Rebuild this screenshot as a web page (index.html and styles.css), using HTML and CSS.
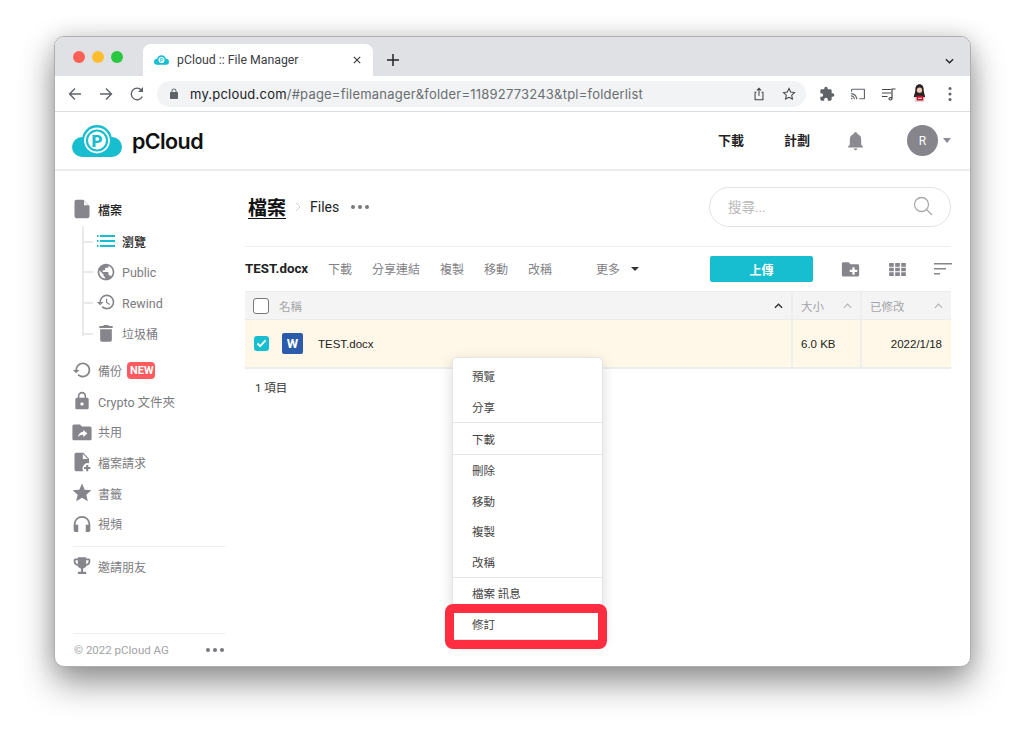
FILE: index.html
```html
<!DOCTYPE html>
<html lang="zh-Hant">
  <head>
    <meta charset="UTF-8" />
    <title>pCloud :: File Manager</title>
    <link rel="stylesheet" href="styles.css">
  </head>
  <body>
    <div class="window">
      <!-- Tab strip -->
      <div class="tabstrip">
        <div class="lights">
          <span class="light red"></span>
          <span class="light yellow"></span>
          <span class="light green"></span>
        </div>
        <div class="tab">
          <svg class="favicon" viewBox="0 0 50 32">
            <circle cx="25" cy="15" r="15" fill="#17bed0"/>
            <circle cx="10" cy="22" r="10" fill="#17bed0"/>
            <circle cx="40" cy="22" r="10" fill="#17bed0"/>
            <path fill="#17bed0" d="M10 20h30v12H10z"/>
            <circle cx="25" cy="16" r="10" fill="#fff"/>
            <text x="25" y="22" class="favicon-p">P</text>
          </svg>
          <span class="tab-title">pCloud :: File Manager</span>
          <svg class="tab-close" viewBox="0 0 10 10"><path d="M1 1l8 8M9 1l-8 8"/></svg>
        </div>
        <svg class="tab-new" viewBox="0 0 12 12"><path d="M6 0v12M0 6h12"/></svg>
        <svg class="tab-menu" viewBox="0 0 10 6"><path d="M1 1l4 4 4-4"/></svg>
      </div>

      <!-- Browser toolbar -->
      <div class="toolbar">
        <svg class="tool-icon" viewBox="0 0 16 16"><path class="line" d="M14 8H2.500M8 2.500L2.500 8 8 13.500"/></svg>
        <svg class="tool-icon" viewBox="0 0 16 16"><path class="line" d="M2 8h11.500M8 2.500L13.500 8 8 13.500"/></svg>
        <svg class="tool-icon" viewBox="0 0 16 16"><path class="line" d="M13.300 10.500A5.800 5.800 0 1 1 12.500 4.200"/><path class="solid" d="M14 1v5H9z"/></svg>
        <div class="urlbar">
          <svg class="lock" viewBox="0 0 24 24"><path class="solid" d="M18 8h-1V6c0-2.760-2.240-5-5-5S7 3.240 7 6v2H6c-1.100 0-2 .900-2 2v10c0 1.100.900 2 2 2h12c1.100 0 2-.900 2-2V10c0-1.100-.900-2-2-2zM15.100 8H8.900V6c0-1.710 1.390-3.100 3.100-3.100 1.710 0 3.100 1.390 3.100 3.100v2z"/></svg>
          <span class="url"><b>my.pcloud.com</b>/#page=filemanager&amp;folder=11892773243&amp;tpl=folderlist</span>
          <svg class="url-icon share" viewBox="0 0 16 16"><path class="line thin" d="M5 6H3.500v8.500h9V6H11M8 10V1.500M5.500 4L8 1.500 10.500 4"/></svg>
          <svg class="url-icon" viewBox="0 0 16 16"><path class="line thin" d="M8 1.800l1.900 4 4.400.6-3.200 3 .8 4.400L8 11.700l-3.900 2.100.8-4.400-3.200-3 4.400-.6z"/></svg>
        </div>
        <div class="ext-icons">
          <svg class="ext-icon" viewBox="0 0 24 24"><path class="solid" d="M20.500 11H19V7c0-1.100-.900-2-2-2h-4V3.500C13 2.120 11.880 1 10.500 1S8 2.120 8 3.500V5H4c-1.100 0-1.990.900-1.990 2v3.800H3.500c1.490 0 2.700 1.210 2.700 2.700s-1.210 2.700-2.700 2.700H2V20c0 1.100.900 2 2 2h3.800v-1.500c0-1.490 1.210-2.700 2.700-2.700 1.490 0 2.700 1.210 2.700 2.700V22H17c1.100 0 2-.900 2-2v-4h1.500c1.380 0 2.500-1.120 2.500-2.500S21.880 11 20.500 11z"/></svg>
          <svg class="ext-icon" viewBox="0 0 24 24"><path class="solid" d="M21 4H3.500C2.400 4 1.500 4.900 1.500 6v2.500h1.700V5.700h17.600v12.600H14V20h7c1.100 0 1.500-.9 1.500-2V6c0-1.100-.4-2-1.500-2zM1.500 17.500V20h2.500c0-1.400-1.100-2.500-2.500-2.500zm0-3.500v1.700c2.400 0 4.300 1.900 4.300 4.300h1.700c0-3.300-2.700-6-6-6zm0-3.500v1.700c4.300 0 7.800 3.500 7.800 7.800H11c0-5.200-4.300-9.500-9.500-9.500z"/></svg>
          <svg class="ext-icon" viewBox="0 0 16 16"><path class="line thin" d="M1 3.500h9M1 7h9M1 10.500h5.500M11 12.500c0 1-.800 1.500-1.500 1.500S8 13.500 8 12.800s.700-1.300 1.500-1.300 1.500.300 1.500 1zM11 12.500V3h3.500"/></svg>
          <svg class="ext-avatar" viewBox="0 0 16 20">
            <path fill="#2b2424" d="M8 0c3 0 4.500 2.500 4.500 6 0 4 1.500 5 1.500 8H2c0-3 1.500-4 1.500-8C3.500 2.500 5 0 8 0z"/>
            <circle cx="8" cy="6.500" r="2.800" fill="#f3cdb8"/>
            <path fill="#e3dcd6" d="M3 14h10v5H3z"/>
            <path fill="#c8102e" d="M5 12.500h7v5H5z"/>
            <path fill="#fff" d="M6.500 14.500h4v1h-4z"/>
          </svg>
          <svg class="ext-icon" viewBox="0 0 16 16"><circle class="solid" cx="8" cy="2.500" r="1.500"/><circle class="solid" cx="8" cy="8" r="1.500"/><circle class="solid" cx="8" cy="13.500" r="1.500"/></svg>
        </div>
      </div>

      <!-- App header -->
      <header class="app-header">
        <svg class="logo" viewBox="0 0 50 32">
          <circle cx="25" cy="15" r="15" fill="#17bed0"/>
          <circle cx="10" cy="22" r="10" fill="#17bed0"/>
          <circle cx="40" cy="22" r="10" fill="#17bed0"/>
          <path fill="#17bed0" d="M10 20h30v12H10z"/>
          <circle cx="25" cy="15.500" r="12" fill="none" stroke="#fff" stroke-width="1.800"/>
          <circle cx="25" cy="15.500" r="9" fill="#fff"/>
          <text x="25" y="21.500" class="logo-p">P</text>
        </svg>
        <span class="logo-text">pCloud</span>
        <nav class="app-nav">
          <a class="nav-link">下載</a>
          <a class="nav-link">計劃</a>
        </nav>
        <svg class="bell" viewBox="0 0 24 24"><path d="M12 23c1.100 0 2-.900 2-2h-4c0 1.100.900 2 2 2zm6.500-6.500V11c0-3.070-1.630-5.640-4.500-6.320V4c0-.830-.670-1.500-2-1.500s-2 .670-2 1.500v.680C7.140 5.360 5.500 7.920 5.500 11v5.500L3.500 19v1h17v-1z"/></svg>
        <div class="user-avatar">R</div>
        <span class="user-caret"></span>
      </header>

      <div class="content">
        <!-- Sidebar -->
        <aside class="sidebar">
          <div class="side-item active-parent">
            <svg class="side-icon" viewBox="0 0 24 24"><path d="M5.500 1C4.100 1 3 2.100 3 3.500v17C3 21.900 4.100 23 5.500 23h13c1.400 0 2.500-1.100 2.500-2.500V8.500L13.500 1zM14.500 2.500L19.500 7.500h-5z"/></svg>
            <span>檔案</span>
          </div>
          <div class="tree">
            <div class="side-item tree-item active">
              <svg class="side-icon list-icon" viewBox="0 0 18 12"><path fill="#17bed0" d="M0 0h1.500v2H0zM3 0h15v2H3zM0 5h1.500v2H0zM3 5h15v2H3zM0 10h1.500v2H0zM3 10h15v2H3z"/></svg>
              <span>瀏覽</span>
            </div>
            <div class="side-item tree-item">
              <svg class="side-icon" viewBox="0 0 24 24"><path d="M12 2C6.480 2 2 6.480 2 12s4.480 10 10 10 10-4.480 10-10S17.520 2 12 2zm-1 17.930c-3.950-.490-7-3.850-7-7.930 0-.620.080-1.210.210-1.790L9 15v1c0 1.100.900 2 2 2v1.930zm6.900-2.540c-.260-.810-1-1.390-1.900-1.390h-1v-3c0-.550-.450-1-1-1H8v-2h2c.550 0 1-.450 1-1V7h2c1.100 0 2-.900 2-2v-.410c2.930 1.190 5 4.060 5 7.410 0 2.080-.800 3.970-2.100 5.390z"/></svg>
              <span class="latin">Public</span>
            </div>
            <div class="side-item tree-item">
              <svg class="side-icon" viewBox="0 0 24 24"><path d="M13 3a9 9 0 0 0-9 9H1l3.890 3.890.070.140L9 12H6c0-3.870 3.130-7 7-7s7 3.130 7 7-3.130 7-7 7c-1.930 0-3.680-.790-4.940-2.060l-1.420 1.420A8.954 8.954 0 0 0 13 21a9 9 0 0 0 0-18zm-1 5v5l4.280 2.540.720-1.210-3.500-2.080V8H12z"/></svg>
              <span class="latin">Rewind</span>
            </div>
            <div class="side-item tree-item">
              <svg class="side-icon" viewBox="0 0 24 24"><path d="M5 20.500c0 1.100.900 2 2 2h10c1.100 0 2-.900 2-2V7.500H5zM20 3.500h-4.500l-1-1h-5l-1 1H4V6h16z"/></svg>
              <span>垃圾桶</span>
            </div>
          </div>
          <div class="side-item">
            <svg class="side-icon" viewBox="0 0 24 24"><path d="M13 3a9 9 0 0 0-9 9H1l4 4 4-4H6.200c0-3.760 3.040-6.800 6.800-6.800s6.800 3.040 6.800 6.800-3.040 6.800-6.800 6.800c-1.900 0-3.600-.770-4.800-2L6.600 18.400A9 9 0 1 0 13 3z"/></svg>
            <span>備份</span>
            <span class="badge">NEW</span>
          </div>
          <div class="side-item">
            <svg class="side-icon" viewBox="0 0 24 24"><path d="M18 8h-1V6c0-2.760-2.240-5-5-5S7 3.240 7 6v2H6c-1.100 0-2 .900-2 2v10c0 1.100.900 2 2 2h12c1.100 0 2-.900 2-2V10c0-1.100-.900-2-2-2zm-6 9.500c-1.100 0-2-.900-2-2s.900-2 2-2 2 .900 2 2-.900 2-2 2zM15.100 8H8.900V6c0-1.710 1.390-3.100 3.100-3.100 1.710 0 3.100 1.390 3.100 3.100v2z"/></svg>
            <span class="latin">Crypto 文件夾</span>
          </div>
          <div class="side-item">
            <svg class="side-icon" viewBox="0 0 24 24"><path d="M2.500 3C1.400 3 .500 3.900.500 5v15c0 1.100.900 2 2 2h19c1.100 0 2-.900 2-2V7.500c0-1.100-.900-2-2-2H12L9.500 3zM13.500 9.500l5 4.300-5 4.200v-2.700c-2.700 0-4.700.800-6.300 2.700.500-3.300 2.700-5.800 6.300-6.200z"/></svg>
            <span>共用</span>
          </div>
          <div class="side-item">
            <svg class="side-icon" viewBox="0 0 24 24"><path d="M5 1C3.900 1 3 1.900 3 3v18c0 1.100.900 2 2 2h8.500a6.500 6.500 0 0 1 7-9.500V8l-7-7zM13 2.500L19 8.500h-6zM17 15.500h2.500V18H22v2.500h-2.500V23H17v-2.500h-2.500V18H17z"/></svg>
            <span>檔案請求</span>
          </div>
          <div class="side-item">
            <svg class="side-icon" viewBox="0 0 24 24"><path d="M12 17.800L19 22l-1.850-7.950L23.300 8.700l-8.100-.700L12 .500 8.800 8 .700 8.700l6.150 5.350L5 22z"/></svg>
            <span>書籤</span>
          </div>
          <div class="side-item">
            <svg class="side-icon" viewBox="0 0 24 24"><path d="M12 2.500A10 10 0 0 0 2 12.500v7c0 1 .800 2 2 2h3.500v-8.500H4.300v-1c0-4.200 3.500-7.500 7.700-7.500s7.700 3.300 7.700 7.500v1h-3.200v8.500H20c1.200 0 2-1 2-2v-7a10 10 0 0 0-10-10z"/></svg>
            <span>視頻</span>
          </div>
          <div class="side-divider"></div>
          <div class="side-item">
            <svg class="side-icon" viewBox="0 0 24 24"><path d="M20 3h-3V1.500H7V3H4C2.900 3 2 3.900 2 5v1.500c0 2.700 2.050 4.900 4.700 5.200.700 1.700 2.300 3 4.100 3.350V19H7v2.500h10V19h-3.800v-3.950c1.800-.350 3.400-1.650 4.100-3.350 2.650-.300 4.700-2.500 4.700-5.200V5c0-1.100-.900-2-2-2zM4.200 6.500V5.200H7v4.300C5.400 9.100 4.200 7.900 4.200 6.500zm15.600 0c0 1.400-1.200 2.600-2.800 3V5.200h2.800z"/></svg>
            <span>邀請朋友</span>
          </div>
          <div class="side-footer">
            <span>© 2022 pCloud AG</span>
            <span class="dots small"><i></i><i></i><i></i></span>
          </div>
        </aside>

        <!-- File list -->
        <main class="main">
          <div class="crumbs">
            <span class="crumb-root">檔案</span>
            <svg class="crumb-sep" viewBox="0 0 6 10"><path d="M1 1l4 4-4 4"/></svg>
            <span class="crumb-current">Files</span>
            <span class="dots"><i></i><i></i><i></i></span>
            <div class="search">
              <span>搜尋...</span>
              <svg class="search-icon" viewBox="0 0 20 20"><circle cx="8.500" cy="8.500" r="7"/><path d="M13.500 13.500l5.500 5.500"/></svg>
            </div>
          </div>

          <div class="actions">
            <span class="sel-name">TEST.docx</span>
            <span class="action">下載</span>
            <span class="action">分享連結</span>
            <span class="action">複製</span>
            <span class="action">移動</span>
            <span class="action">改稱</span>
            <span class="action more">更多</span>
            <span class="more-caret"></span>
            <button class="upload">上傳</button>
            <svg class="act-icon folder-add" viewBox="0 0 24 24"><path d="M2.500 3C1.400 3 .500 3.900.500 5v15c0 1.100.900 2 2 2h19c1.100 0 2-.900 2-2V7.500c0-1.100-.900-2-2-2H12L9.500 3zM14.500 9.500h3V13h3.500v3h-3.500v3.500h-3V16H11v-3h3.500z"/></svg>
            <svg class="act-icon grid-view" viewBox="0 0 18 14"><path d="M0 0h5v4H0zM6.500 0h5v4h-5zM13 0h5v4h-5zM0 5h5v4H0zM6.500 5h5v4h-5zM13 5h5v4h-5zM0 10h5v4H0zM6.500 10h5v4h-5zM13 10h5v4h-5z"/></svg>
            <svg class="act-icon sort-view" viewBox="0 0 18 12"><path d="M0 0h18v1.500H0zM0 5h12v1.500H0zM0 10h6v1.500H0z"/></svg>
          </div>

          <div class="table">
            <div class="row head">
              <div class="cell name-cell">
                <span class="check"></span>
                <span>名稱</span>
                <svg class="chev dark" viewBox="0 0 10 6"><path d="M1 5l4-4 4 4"/></svg>
              </div>
              <div class="cell">
                <span>大小</span>
                <svg class="chev" viewBox="0 0 10 6"><path d="M1 5l4-4 4 4"/></svg>
              </div>
              <div class="cell">
                <span>已修改</span>
                <svg class="chev" viewBox="0 0 10 6"><path d="M1 5l4-4 4 4"/></svg>
              </div>
            </div>
            <div class="row file">
              <div class="cell name-cell">
                <span class="check on">
                  <svg viewBox="0 0 12 10"><path d="M1.500 5l3 3 6-6.500"/></svg>
                </span>
                <span class="word-icon">W</span>
                <span class="file-name">TEST.docx</span>
              </div>
              <div class="cell">6.0 KB</div>
              <div class="cell date-cell">2022/1/18</div>
            </div>
          </div>
          <div class="count">1 項目</div>
        </main>
      </div>

      <!-- Context menu -->
      <div class="menu">
        <div class="menu-group">
          <div class="menu-item">預覽</div>
          <div class="menu-item">分享</div>
        </div>
        <div class="menu-group solo">
          <div class="menu-item">下載</div>
        </div>
        <div class="menu-group">
          <div class="menu-item">刪除</div>
          <div class="menu-item">移動</div>
          <div class="menu-item">複製</div>
          <div class="menu-item">改稱</div>
        </div>
        <div class="menu-group">
          <div class="menu-item">檔案 訊息</div>
          <div class="menu-item">修訂</div>
        </div>
      </div>
      <div class="highlight"></div>
    </div>
  </body>
</html>
```

FILE: styles.css
```css
* {
  box-sizing: border-box;
}

body {
  margin: 0;
  padding: 36px 0 0 54px;
  height: 737px;
  overflow: hidden;
  background: #fff;
  font-family: Roboto, "Noto Sans CJK TC", sans-serif;
  color: #222;
}

.window {
  position: relative;
  width: 917px;
  height: 631px;
  display: flex;
  flex-direction: column;
  background: #fff;
  border: 1px solid #aeaeae;
  border-radius: 10px;
  box-shadow: 0 16px 34px rgba(0, 0, 0, 0.42), 0 0 22px rgba(0, 0, 0, 0.12);
  overflow: hidden;
}

/* Tab strip */
.tabstrip {
  height: 39px;
  flex: none;
  display: flex;
  align-items: flex-end;
  background: #dfe1e5;
  position: relative;
}
.lights {
  width: 88px;
  height: 39px;
  padding: 14px 0 0 18px;
  display: flex;
  gap: 7px;
}
.light {
  width: 12px;
  height: 12px;
  border-radius: 50%;
}
.red { background: #ff5f57; }
.yellow { background: #febc2e; }
.green { background: #28c840; }

.tab {
  width: 230px;
  height: 32px;
  display: flex;
  align-items: center;
  padding: 0 10px 0 11px;
  background: #fff;
  border-radius: 8px 8px 0 0;
}
.favicon {
  width: 15px;
  height: 10px;
  margin-right: 8px;
}
.favicon-p {
  font: 700 17px Roboto, sans-serif;
  fill: #17bed0;
  text-anchor: middle;
}
.tab-title {
  flex: 1;
  font-size: 12.300px;
  color: #3c4043;
}
.tab-close {
  width: 8px;
  height: 8px;
  margin-right: 2px;
  fill: none;
  stroke: #333;
  stroke-width: 1.300;
}
.tab-new {
  width: 12px;
  height: 12px;
  margin: 0 0 10px 14px;
  fill: none;
  stroke: #222;
  stroke-width: 1.500;
}
.tab-menu {
  position: absolute;
  right: 16px;
  top: 21px;
  width: 9px;
  height: 6px;
  fill: none;
  stroke: #222;
  stroke-width: 1.500;
}

/* Browser toolbar */
.toolbar {
  height: 36px;
  flex: none;
  display: flex;
  align-items: center;
  padding: 0 0 0 12px;
  border-bottom: 1px solid #dcdde0;
}
.line {
  fill: none;
  stroke: #5f6368;
  stroke-width: 1.400;
}
.line.thin {
  stroke-width: 1.200;
  stroke: #444;
}
.solid {
  fill: #5f6368;
}
.tool-icon {
  width: 16px;
  height: 16px;
  margin-right: 15px;
  flex: none;
}
.urlbar {
  width: 649px;
  height: 26px;
  margin-left: -3px;
  flex: none;
  display: flex;
  align-items: center;
  padding: 0 10px 0 11px;
  background: #f1f3f4;
  border-radius: 13px;
}
.lock {
  width: 12px;
  height: 12px;
  margin-right: 10px;
}
.url {
  flex: 1;
  font-family: Inter, sans-serif;
  font-size: 13px;
  letter-spacing: 0.210px;
  color: #6a6d71;
  white-space: nowrap;
}
.url b {
  font-weight: 400;
  color: #202124;
}
.url-icon {
  width: 14px;
  height: 14px;
  margin-left: 16px;
}
.ext-icons {
  display: flex;
  align-items: center;
  gap: 15px;
  margin-left: 13px;
}
.ext-icon {
  width: 16px;
  height: 16px;
}
.ext-avatar {
  width: 15px;
  height: 19px;
}

/* App header */
.app-header {
  height: 59px;
  flex: none;
  display: flex;
  align-items: center;
  padding: 0 19px 0 17px;
  border-bottom: 2px solid #ececec;
}
.logo {
  width: 50px;
  height: 32px;
}
.logo-p {
  font: 900 17px Roboto, sans-serif;
  fill: #17bed0;
  text-anchor: middle;
}
.logo-text {
  margin-left: 10px;
  font-family: Inter, sans-serif;
  font-size: 21.500px;
  font-weight: 600;
  letter-spacing: -0.6px;
  color: #111;
}
.app-nav {
  display: flex;
  gap: 40px;
  margin-left: auto;
  margin-bottom: 2px;
}
.nav-link {
  font-size: 13px;
  font-weight: 700;
  color: #222;
}
.bell {
  width: 21px;
  height: 21px;
  margin-left: 35px;
  fill: #8a8a90;
}
.user-avatar {
  width: 31px;
  height: 31px;
  margin-left: 41px;
  display: flex;
  align-items: center;
  justify-content: center;
  border-radius: 50%;
  background: #85858b;
  color: #fff;
  font-size: 12px;
}
.user-caret {
  margin-left: 5px;
  border: 4.500px solid transparent;
  border-top: 5px solid #8a8a90;
  border-bottom: 0;
}

.content {
  flex: 1;
  display: flex;
  min-height: 0;
}

/* Sidebar */
.sidebar {
  width: 190px;
  flex: none;
  display: flex;
  flex-direction: column;
  padding: 23px 19px 0 17px;
}
.side-item {
  height: 30.700px;
  flex: none;
  display: flex;
  align-items: center;
  font-size: 12px;
  color: #7b7b80;
}
.latin {
  font-size: 12.500px;
}
.tree .latin {
  padding-top: 2px;
}
.side-icon {
  width: 20px;
  height: 20px;
  margin-right: 6px;
  fill: #85858b;
  flex: none;
}
.side-icon.list-icon {
  width: 18px;
  height: 12px;
  margin: 0 7px 0 1px;
}
.active-parent {
  color: #222;
  font-weight: 500;
}
.tree {
  margin: 1px 0 19.300px 10px;
  border-left: 2px solid #e9e9e9;
  height: 110px;
  padding-left: 12px;
}
.tree-item {
  position: relative;
}
.tree-item::before {
  content: "";
  position: absolute;
  left: -12px;
  top: 15px;
  width: 9px;
  border-top: 2px solid #e9e9e9;
}
.tree-item.active {
  color: #222;
  font-weight: 500;
}
.badge {
  margin-left: 5px;
  padding: 0 0 0 3px;
  width: 28px;
  height: 17px;
  line-height: 17px;
  overflow: hidden;
  border-radius: 4px;
  background: #ff5a5f;
  color: #fff;
  font-size: 11px;
  font-weight: 700;
}
.side-divider {
  height: 1px;
  flex: none;
  margin: 7px 0 4px 1px;
  background: #f0f0f0;
}
.side-footer {
  margin: auto 0 0 1px;
  height: 33px;
  display: flex;
  align-items: center;
  justify-content: space-between;
  border-top: 1px solid #f0f0f0;
  padding: 0 2px 1px 1px;
  font-size: 11.500px;
  color: #a2a2a6;
}

.dots {
  display: inline-flex;
  gap: 3px;
}
.dots i {
  width: 4px;
  height: 4px;
  border-radius: 50%;
  background: #77777c;
}

/* Main */
.main {
  width: 706px;
  flex: none;
}
.crumbs {
  height: 76px;
  display: flex;
  align-items: center;
  padding: 0 0 4px 3px;
  border-bottom: 1px solid #f0f0f0;
}
.crumb-root {
  font-size: 19px;
  font-weight: 700;
  color: #111;
  text-decoration: underline;
  text-underline-offset: 3px;
}
.crumb-sep {
  width: 6px;
  height: 10px;
  margin: 0 9px;
  fill: none;
  stroke: #d2d2d2;
}
.crumb-current {
  font-size: 14px;
  color: #222;
  margin-right: 12px;
}
.search {
  width: 242px;
  height: 40px;
  margin-left: auto;
  display: flex;
  align-items: center;
  justify-content: space-between;
  padding: 0 17px 1px 18px;
  border: 1px solid #e2e2e2;
  border-radius: 20px;
  font-size: 13.500px;
  color: #b9b9b9;
}
.search-icon {
  width: 20px;
  height: 20px;
  fill: none;
  stroke: #a8a8ac;
  stroke-width: 1.300;
}

.actions {
  height: 44px;
  display: flex;
  align-items: center;
  font-size: 12px;
  color: #818186;
  white-space: nowrap;
}
.sel-name {
  width: 83px;
  flex: none;
  padding-bottom: 1px;
  font-weight: 700;
  font-size: 13.300px;
  color: #222;
}
.action {
  flex: none;
  padding-bottom: 2px;
  margin-right: 20px;
}
.action.more {
  margin: 0 11px 0 24px;
}
.more-caret {
  flex: none;
  border: 4px solid transparent;
  border-top: 4px solid #333;
  border-bottom: 0;
}
.upload {
  width: 103px;
  height: 26px;
  flex: none;
  margin-left: 71px;
  border: 0;
  border-radius: 2px;
  background: #17bed0;
  color: #fff;
  font: 700 12px Roboto, "Noto Sans CJK TC", sans-serif;
}
.act-icon {
  fill: #85858b;
  flex: none;
}
.folder-add {
  width: 19px;
  height: 18px;
  margin-left: 28px;
}
.grid-view {
  width: 17px;
  height: 13px;
  margin-left: 29px;
}
.sort-view {
  width: 18px;
  height: 12px;
  margin-left: 28px;
}

/* Table */
.row {
  display: grid;
  grid-template-columns: 546px 69px 91px;
}
.cell {
  display: flex;
  align-items: center;
  padding-left: 8px;
  border-left: 2px solid #eee;
  font-size: 11.500px;
}
.name-cell {
  border-left: 0;
  padding-left: 8px;
}
.row.head {
  height: 29px;
  background: #f4f4f4;
  border-top: 1px solid #ececec;
  border-bottom: 1px solid #ececec;
  color: #a4a4a8;
}
.row.head .chev {
  margin-left: auto;
  margin-right: 8px;
}
.chev {
  width: 9px;
  height: 6px;
  fill: none;
  stroke: #b4b4b8;
  stroke-width: 1.300;
}
.chev.dark {
  stroke: #333;
  stroke-width: 1.600;
}
.check {
  width: 16px;
  height: 16px;
  margin-right: 10px;
  border: 1px solid #77777c;
  border-radius: 3px;
  background: #fff;
  flex: none;
}
.check.on {
  width: 15px;
  height: 15px;
  margin: 0 13px 0 1px;
  padding: 3px 2px;
  border: 0;
  background: #17bed0;
  display: flex;
}
.check.on svg {
  width: 11px;
  height: 9px;
  fill: none;
  stroke: #fff;
  stroke-width: 2;
}
.row.file {
  height: 49px;
  background: #fff8e8;
  border-bottom: 2px solid #ededed;
  color: #222;
}
.word-icon {
  width: 21px;
  height: 21px;
  margin-right: 15px;
  display: flex;
  align-items: center;
  justify-content: center;
  border-radius: 2px;
  background: #2b5cab;
  color: #fff;
  font-size: 13px;
  font-weight: 700;
}
.file-name {
  font-family: "Liberation Sans", sans-serif;
  font-size: 11.500px;
}
.cell:not(.name-cell) {
  font-family: "Liberation Sans", "Noto Sans CJK TC", sans-serif;
}
.date-cell {
  justify-content: flex-end;
  padding-right: 9px;
}
.count {
  padding: 10px 0 0 10px;
  font-size: 11.500px;
  color: #333;
}

/* Context menu */
.menu {
  position: absolute;
  left: 397px;
  top: 320px;
  width: 151px;
  height: 283px;
  padding-top: 3px;
  background: #fff;
  border: 1px solid #e6e6e6;
  border-radius: 5px;
  box-shadow: 0 4px 14px rgba(0, 0, 0, 0.14);
}
.menu-group + .menu-group {
  border-top: 1px solid #e6e6e6;
}
.menu-item {
  height: 30.500px;
  display: flex;
  align-items: center;
  padding-left: 19px;
  font-size: 11.500px;
  color: #444;
}
.solo .menu-item {
  height: 31px;
}

.highlight {
  position: absolute;
  left: 390px;
  top: 567px;
  width: 162px;
  height: 45px;
  border: 9px solid #ff2d3f;
  border-radius: 8px;
}
```
